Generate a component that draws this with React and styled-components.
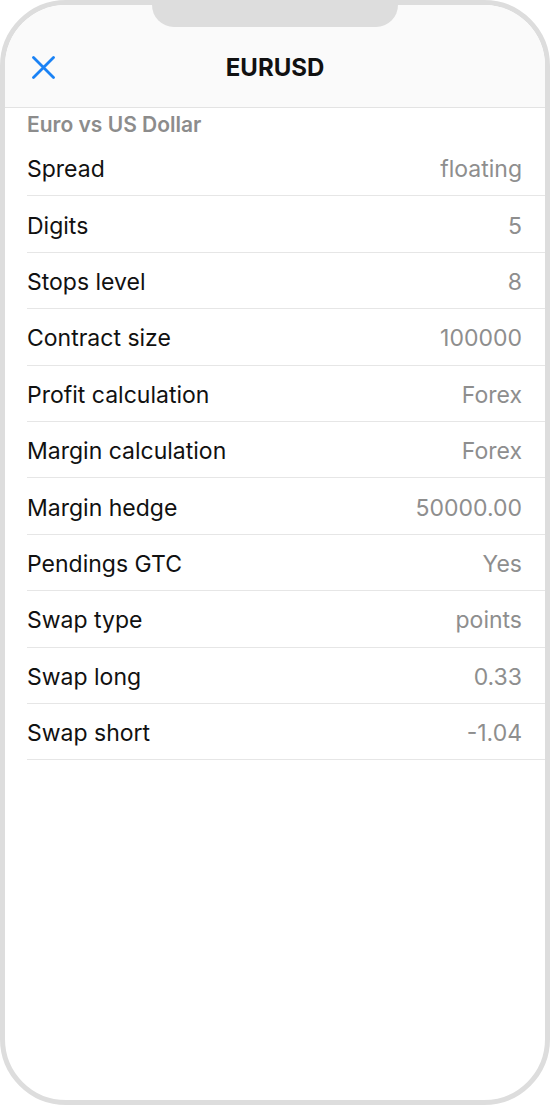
import React from 'react';
import styled, { createGlobalStyle } from 'styled-components';

const GlobalStyle = createGlobalStyle`
  html, body {
    margin: 0;
    padding: 0;
    background: #fff;
  }
  body {
    font-family: Inter, "Noto Sans", "Liberation Sans", sans-serif;
    -webkit-font-smoothing: antialiased;
  }
`;

const Phone = styled.div`
  position: relative;
  box-sizing: border-box;
  width: 550px;
  height: 1105px;
  border: 5px solid #dddddd;
  border-radius: 66px;
  overflow: hidden;
  background: #fff;
  display: flex;
  flex-direction: column;
`;

const Notch = styled.div`
  position: absolute;
  top: -5px;
  left: 147px;
  width: 246px;
  height: 27px;
  background: #dddddd;
  border-radius: 0 0 22px 22px;
  z-index: 2;
`;

const Header = styled.header`
  background: #fafafa;
  border-bottom: 1px solid #e3e3e3;
  padding: 40px 22px 18px;
`;

const NavRow = styled.div`
  position: relative;
  height: 44px;
  display: flex;
  align-items: center;
  justify-content: center;
`;

const CloseButton = styled.button`
  position: absolute;
  left: 4px;
  top: 50%;
  transform: translateY(-50%);
  border: 0;
  background: none;
  padding: 0;
  width: 24px;
  height: 24px;
  display: flex;
  align-items: center;
  justify-content: center;
  cursor: pointer;
`;

const Title = styled.h1`
  margin: 0;
  font-size: 24px;
  font-weight: 700;
  color: #111;
`;

const Subtitle = styled.div`
  padding: 0 22px;
  height: 32px;
  display: flex;
  align-items: center;
  font-size: 21px;
  font-weight: 600;
  color: #8c8c8c;
`;

const List = styled.ul`
  list-style: none;
  margin: 0;
  padding: 0 0 0 22px;
`;

const Row = styled.li`
  box-sizing: border-box;
  height: 56.4px;
  padding: 3px 23px 0 0;
  display: flex;
  align-items: center;
  justify-content: space-between;
  border-bottom: 1px solid #e6e6e6;
  font-size: 23px;
`;

const Label = styled.span`
  color: #111;
`;

const Value = styled.span`
  color: #8e8e8e;
`;

const specs = [
  ['Spread', 'floating'],
  ['Digits', '5'],
  ['Stops level', '8'],
  ['Contract size', '100000'],
  ['Profit calculation', 'Forex'],
  ['Margin calculation', 'Forex'],
  ['Margin hedge', '50000.00'],
  ['Pendings GTC', 'Yes'],
  ['Swap type', 'points'],
  ['Swap long', '0.33'],
  ['Swap short', '-1.04'],
];

const CloseIcon = () => (
  <svg width="23" height="23" viewBox="0 0 23 23" fill="none">
    <path d="M1.5 1.5 L21.5 21.5 M21.5 1.5 L1.5 21.5" stroke="#1a82f5" strokeWidth="2.8" strokeLinecap="round" />
  </svg>
);

export default function App() {
  return (
    <>
      <GlobalStyle />
      <Phone>
        <Notch />
        <Header>
          <NavRow>
            <CloseButton aria-label="Close">
              <CloseIcon />
            </CloseButton>
            <Title>EURUSD</Title>
          </NavRow>
        </Header>
        <Subtitle>Euro vs US Dollar</Subtitle>
        <List>
          {specs.map(([label, value]) => (
            <Row key={label}>
              <Label>{label}</Label>
              <Value>{value}</Value>
            </Row>
          ))}
        </List>
      </Phone>
    </>
  );
}
